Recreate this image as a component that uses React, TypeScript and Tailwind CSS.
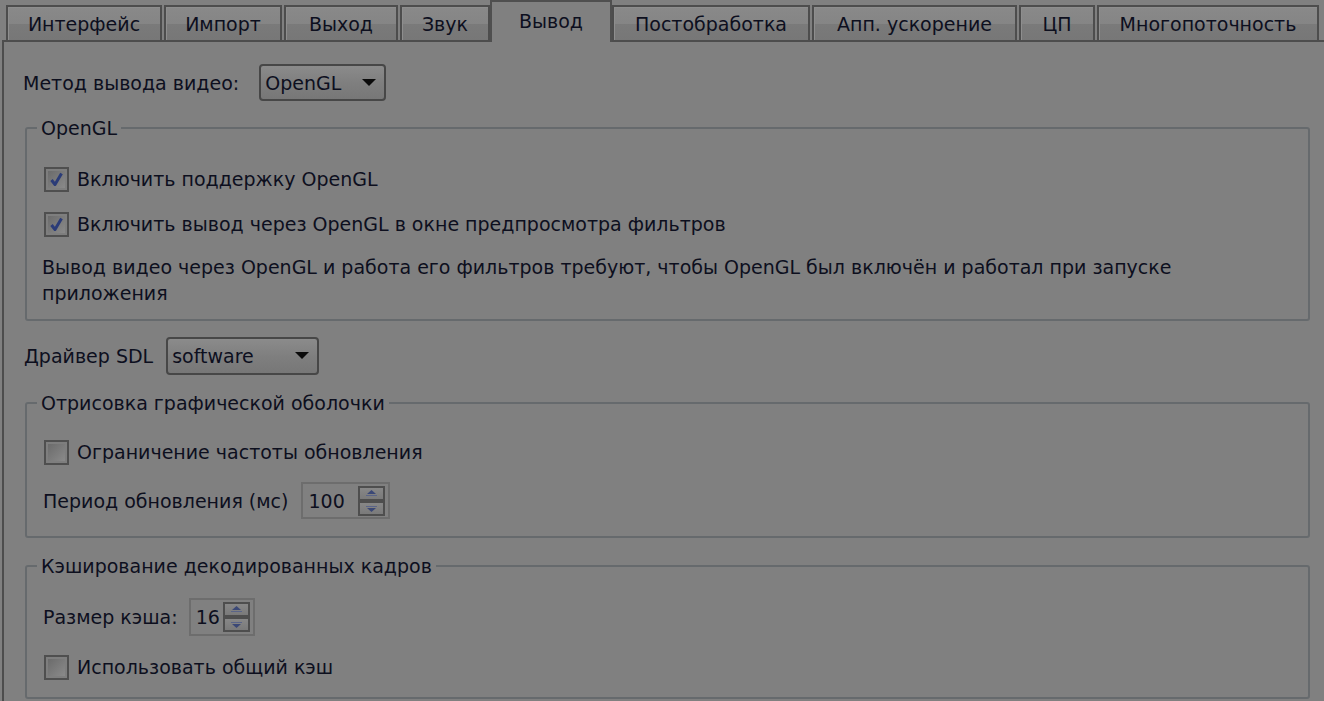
import React from "react";

type Tab = { label: string; cls: string; active?: boolean };

const tabs: Tab[] = [
  { label: "Интерфейс", cls: "ml-[6px] w-[156px]" },
  { label: "Импорт", cls: "ml-[2px] w-[118px]" },
  { label: "Выход", cls: "ml-[2px] w-[114px]" },
  { label: "Звук", cls: "ml-[2px] w-[90px]" },
  { label: "Вывод", cls: "w-[122px]", active: true },
  { label: "Постобработка", cls: "w-[198px]" },
  { label: "Апп. ускорение", cls: "ml-[2px] w-[205px]" },
  { label: "ЦП", cls: "ml-[2px] w-[76px]" },
  { label: "Многопоточность", cls: "ml-[2px] w-[222px]" },
];

function TabButton({ tab }: { tab: Tab }) {
  if (tab.active) {
    return (
      <div
        className={`${tab.cls} relative z-10 -mb-[2px] flex h-[42px] shrink-0 items-start justify-center border-2 border-b-0 border-[#4f4f4f] bg-[#808080] pt-[6px]`}
      >
        {tab.label}
      </div>
    );
  }
  return (
    <div
      className={`${tab.cls} flex h-[35px] shrink-0 items-center justify-center border-2 border-b-0 border-[#4d4d4d] bg-[linear-gradient(#898989_0%,#858585_50%,#7a7a7a_52%,#777777_100%)] pt-[1px] shadow-[inset_1px_1px_0_#8e8e8e]`}
    >
      {tab.label}
    </div>
  );
}

function Arrow() {
  return (
    <svg width="14" height="8" viewBox="0 0 14 8">
      <path d="M0 0 H14 L7 7 Z" fill="#0b0b0b" />
    </svg>
  );
}

function Combo({ value, cls }: { value: string; cls: string }) {
  return (
    <div
      className={`${cls} flex items-center justify-between rounded-[4px] border-2 border-[#474747] bg-[linear-gradient(#8b8b8b,#7f7f7f_50%,#777777)] pl-[4px] pr-[8px]`}
    >
      <span>{value}</span>
      <Arrow />
    </div>
  );
}

function SpinBtn({ up }: { up?: boolean }) {
  return (
    <div className="flex h-[15px] w-[27px] items-center justify-center border-2 border-[#4e4e4e] bg-[linear-gradient(#878787,#7a7a7a)]">
      <svg width="13" height="9" viewBox="0 0 13 9">
        {up ? (
          <>
            <path d="M6.5 1 L11 5 H2 Z" fill="#3b4876" />
            <rect x="1" y="6" width="11" height="1" fill="#5a6488" />
          </>
        ) : (
          <>
            <rect x="1" y="2" width="11" height="1" fill="#5a6488" />
            <path d="M2 4 H11 L6.5 8 Z" fill="#3b4876" />
          </>
        )}
      </svg>
    </div>
  );
}

function Spin({ value, cls }: { value: string; cls: string }) {
  return (
    <div
      className={`${cls} flex items-center justify-between border-2 border-[#6d6d6d] bg-[#808080] pl-[5px] pr-[3px]`}
    >
      <span>{value}</span>
      <div className="flex flex-col">
        <SpinBtn up />
        <SpinBtn />
      </div>
    </div>
  );
}

function Check({ checked, label, cls }: { checked?: boolean; label: string; cls: string }) {
  return (
    <div className={`${cls} flex h-[26px] items-center`}>
      <div className="ml-[1px] h-[25px] w-[25px] shrink-0 border-2 border-[#4f4f4f] bg-[#7e7e7e] p-[2px]">
        <div className="relative h-full w-full bg-[linear-gradient(135deg,#6b6b6b,#8a8a8a)]">
          {checked && (
            <svg
              className="absolute inset-0"
              width="17"
              height="17"
              viewBox="0 0 17 17"
            >
              <path
                d="M3.5 9 L7 13.5 L13.5 2.5"
                fill="none"
                stroke="#2b3c78"
                strokeWidth="3"
                strokeLinejoin="round"
              />
            </svg>
          )}
        </div>
      </div>
      <span className="ml-[8px]">{label}</span>
    </div>
  );
}

function Group({ title, cls, children }: { title: string; cls: string; children: React.ReactNode }) {
  return (
    <fieldset
      className={`${cls} ml-[2px] w-[1285px] rounded-[3px] border-2 border-[#666a6d] p-0`}
    >
      <legend className="ml-[10px] px-[4px] leading-[26px]">{title}</legend>
      {children}
    </fieldset>
  );
}

export default function App() {
  return (
    <div className="h-[701px] w-[1324px] overflow-hidden bg-[#808080] font-['DejaVu_Sans',sans-serif] text-[19px] leading-[26px] text-[#0d0f1e]">
      <div className="flex h-[40px] items-end">
        {tabs.map((t) => (
          <TabButton key={t.label} tab={t} />
        ))}
      </div>

      <div className="ml-[2px] h-[700px] border-l-2 border-t-2 border-[#4d4d4d] pl-[19px] pt-[22px]">
        <div className="flex h-[37px] items-center">
          <span>Метод вывода видео:</span>
          <Combo value="OpenGL" cls="ml-[20px] h-[37px] w-[127px]" />
        </div>

        <Group title="OpenGL" cls="mt-[14px]">
          <div className="pb-[13px] pl-[16px]">
            <Check checked label="Включить поддержку OpenGL" cls="mt-[25px]" />
            <Check
              checked
              label="Включить вывод через OpenGL в окне предпросмотра фильтров"
              cls="mt-[19px]"
            />
            <p className="mt-[17px] -ml-[1px]">
              Вывод видео через OpenGL и работа его фильтров требуют, чтобы OpenGL был включён и работал при запуске
              <br />
              приложения
            </p>
          </div>
        </Group>

        <div className="ml-[1px] mt-[16px] flex h-[38px] items-center">
          <span>Драйвер SDL</span>
          <Combo value="software" cls="ml-[13px] h-[38px] w-[153px]" />
        </div>

        <Group title="Отрисовка графической оболочки" cls="mt-[15px]">
          <div className="pb-[17px] pl-[16px]">
            <Check label="Ограничение частоты обновления" cls="mt-[23px]" />
            <div className="mt-[17px] flex h-[37px] items-center">
              <span>Период обновления (мс)</span>
              <Spin value="100" cls="ml-[13px] h-[37px] w-[89px]" />
            </div>
          </div>
        </Group>

        <Group title="Кэширование декодированных кадров" cls="mt-[15px]">
          <div className="pb-[17px] pl-[16px]">
            <div className="mt-[19px] flex h-[38px] items-center">
              <span>Размер кэша:</span>
              <Spin value="16" cls="ml-[11px] h-[38px] w-[66px]" />
            </div>
            <Check label="Использовать общий кэш" cls="mt-[18px]" />
          </div>
        </Group>
      </div>
    </div>
  );
}
